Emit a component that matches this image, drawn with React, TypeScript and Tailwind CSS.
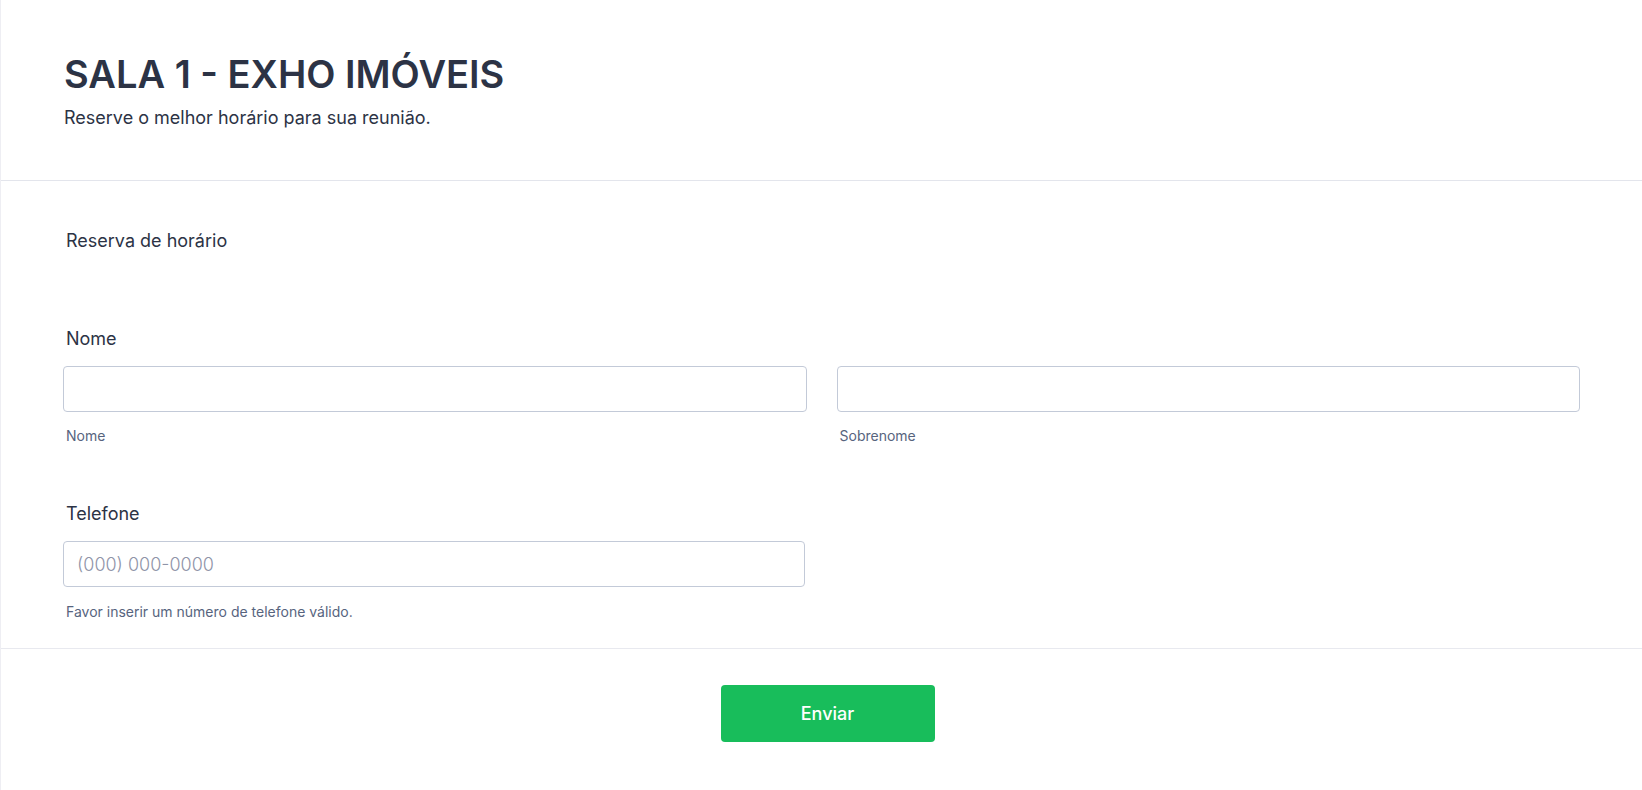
import React from "react";

export default function App() {
  return (
    <div
      className="w-full h-[790px] bg-white border-l border-[#eeeef3] text-[#2c3345] overflow-hidden"
      style={{ fontFamily: "Inter, 'Noto Sans', sans-serif" }}
    >
      <header className="h-[181px] border-b border-[#e3e5ec] pl-[63px] pt-[51px]">
        <h1 className="text-[38px] leading-[46px] font-semibold">SALA 1 - EXHO IMÓVEIS</h1>
        <p className="mt-[9px] text-[18px] leading-[24px]">Reserve o melhor horário para sua reunião.</p>
      </header>

      <main className="px-[62px] pt-[48px] pb-[26px] border-b border-[#e8e9ef]">
        <div className="pl-[3px] text-[18px] leading-[24px]">Reserva de horário</div>

        <div className="mt-[74px]">
          <label className="block pl-[3px] text-[18px] leading-[24px]">Nome</label>
          <div className="mt-[15px] grid grid-cols-2 gap-[30px]">
            <div>
              <input
                type="text"
                className="block w-full h-[46px] rounded-[4px] border border-[#c3cad8] bg-white px-3 outline-none"
              />
              <div className="mt-[14px] pl-[3px] text-[14px] leading-[20px] text-[#57647e]">Nome</div>
            </div>
            <div>
              <input
                type="text"
                className="block w-full h-[46px] rounded-[4px] border border-[#c3cad8] bg-white px-3 outline-none"
              />
              <div className="mt-[14px] pl-[3px] text-[14px] leading-[20px] text-[#57647e]">Sobrenome</div>
            </div>
          </div>
        </div>

        <div className="mt-[56px]">
          <label className="block pl-[3px] text-[18px] leading-[24px]">Telefone</label>
          <div className="mt-[15px] grid grid-cols-2 gap-[30px]">
            <div>
              <input
                type="tel"
                placeholder="(000) 000-0000"
                className="block w-[742px] h-[46px] rounded-[4px] border border-[#c3cad8] bg-white pl-[13px] pr-3 text-[18px] font-light text-[#2c3345] placeholder:text-[#8f94a8] outline-none"
              />
              <div className="mt-[15px] pl-[3px] text-[14px] leading-[20px] text-[#57647e]">
                Favor inserir um número de telefone válido.
              </div>
            </div>
          </div>
        </div>
      </main>

      <footer className="flex justify-center pt-[36px] pl-[12px]">
        <button
          type="button"
          className="w-[214px] h-[57px] rounded-[4px] bg-[#18bd5b] text-white text-[18px] font-medium"
        >
          Enviar
        </button>
      </footer>
    </div>
  );
}
